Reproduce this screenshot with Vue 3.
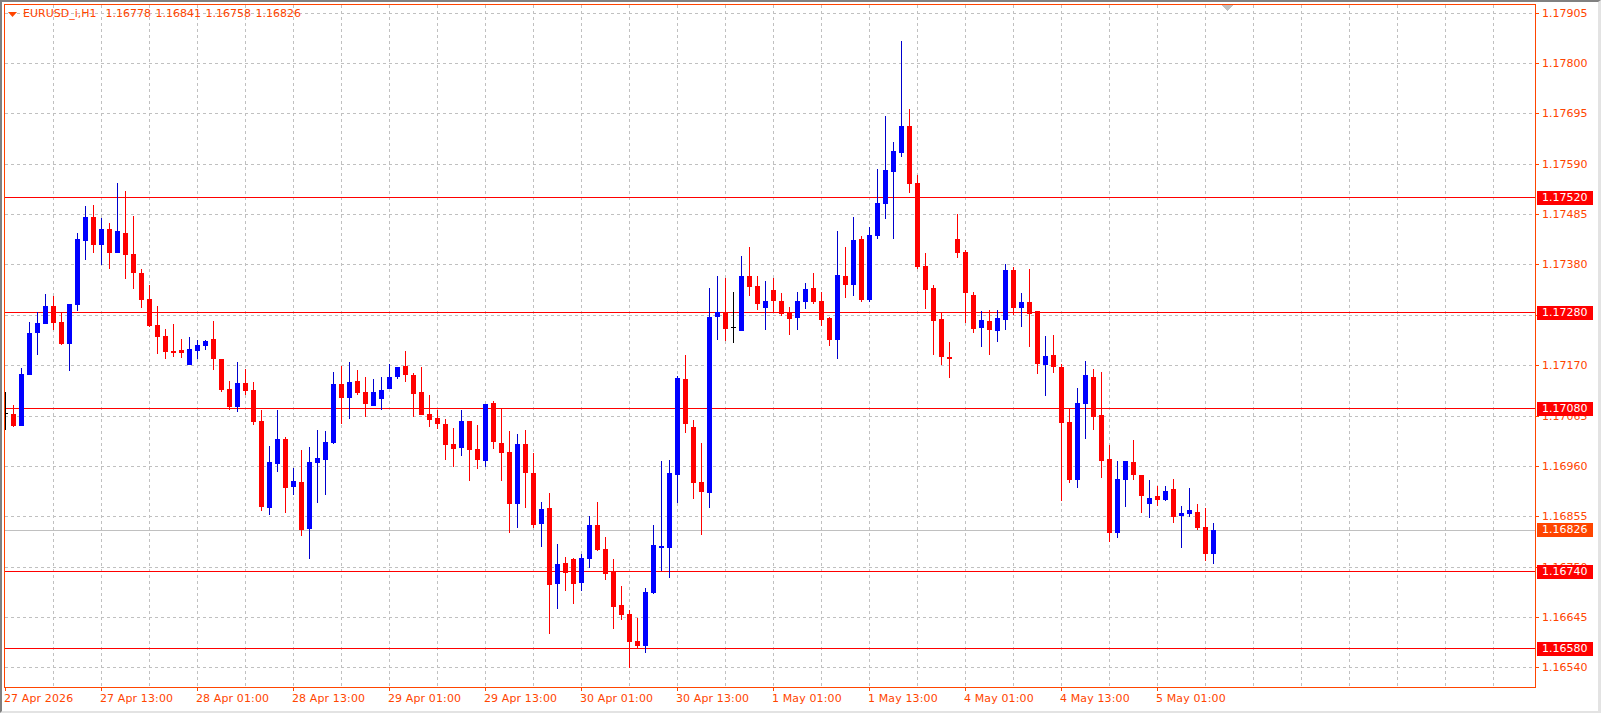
<script setup>
// each candle: colour, high, body top, body bottom, low
const raw = `k 392 413 414 430
r 405 414 426 427
b 368 374 426 426
b 322 333 375 375
b 312 323 333 355
b 294 306 324 324
r 296 306 323 330
r 313 322 344 345
b 304 304 344 371
b 233 239 305 311
b 206 217 241 260
r 205 217 245 253
b 218 229 245 265
r 223 229 253 269
b 183 231 253 253
r 191 233 255 279
r 216 254 273 289
r 269 273 300 308
r 285 299 326 327
r 306 325 337 354
r 329 336 352 359
r 324 351 353 357
r 339 350 353 358
b 337 349 365 365
b 340 345 351 359
b 340 341 346 350
r 321 339 359 370
r 359 359 390 392
r 381 389 407 410
b 362 383 407 412
r 369 383 391 395
r 382 390 422 425
r 410 421 507 511
b 446 462 508 515
b 410 439 464 472
r 437 439 488 513
b 468 481 487 495
r 450 482 530 536
b 447 462 529 559
b 430 458 463 503
b 431 442 460 495
b 372 384 443 444
r 366 384 398 424
b 362 382 398 419
r 370 381 393 395
r 377 392 404 417
b 379 392 406 406
b 377 390 399 410
b 364 377 389 389
b 367 367 377 379
r 351 366 375 382
r 373 375 394 417
r 367 392 415 415
r 395 414 420 427
r 410 418 424 429
r 419 424 445 460
r 428 444 449 467
b 410 421 448 456
r 421 421 450 481
r 425 449 460 469
b 404 404 461 467
r 401 403 442 449
r 409 443 453 481
r 431 452 504 533
b 434 444 504 528
r 430 444 473 508
r 453 473 525 528
b 502 509 524 547
r 493 508 585 634
b 544 564 584 609
r 557 563 573 591
r 558 559 584 604
b 554 558 583 591
b 516 525 559 568
r 502 525 550 551
r 537 549 574 580
r 559 572 607 629
r 586 605 615 620
r 610 614 642 668
r 618 641 646 648
b 588 592 646 653
b 525 545 593 594
b 461 546 548 571
b 460 473 548 578
b 376 378 475 503
r 355 379 424 433
r 420 427 483 499
r 443 482 492 535
b 288 317 493 508
b 276 312 317 340
r 278 312 329 341
k 292 327 328 343
b 256 276 331 331
r 247 276 287 296
r 276 286 304 310
b 281 301 308 330
r 278 290 301 312
r 293 301 314 316
r 307 312 319 335
b 292 301 318 330
b 283 289 302 309
r 273 288 302 304
r 292 301 320 326
r 317 318 340 346
b 231 275 340 359
r 247 276 285 298
b 217 240 285 296
r 236 239 300 302
b 227 235 300 302
b 169 203 236 239
b 116 170 204 219
b 142 151 172 239
b 41 126 153 157
r 109 126 184 193
r 175 183 267 269
r 253 266 290 309
r 285 288 321 355
r 312 319 357 365
r 342 357 359 378
r 214 239 253 258
r 250 252 293 323
r 292 295 329 333
b 311 320 328 347
r 310 321 330 355
b 310 318 331 342
b 264 270 320 330
r 267 270 308 315
b 293 302 308 327
r 269 302 314 347
r 311 311 364 374
b 336 356 365 396
r 335 355 367 373
r 364 367 423 501
r 409 422 480 483
b 388 403 480 488
b 361 375 404 439
r 369 377 417 430
r 372 415 461 478
r 445 459 533 542
b 461 479 533 538
b 461 461 480 507
r 440 462 475 480
r 475 475 496 513
b 480 498 504 518
r 486 496 500 506
b 486 491 500 501
r 479 489 517 523
b 506 513 516 548
b 488 510 514 517
r 504 512 528 530
r 508 527 554 561
b 523 530 554 564`

const fills = { r: '#ff0000', b: '#0000ff', k: '#000000' }
const wicks = { r: '#ff0000', b: '#0000cd', k: '#000000' }
const candles = raw.split('\n').map((row, i) => {
  const [c, high, top, bottom, low] = row.trim().split(' ')
  return { x: 5 + i * 8, fill: fills[c], wick: wicks[c], high: +high, top: +top, bottom: +bottom, low: +low }
})

const gridY = [13, 63, 113, 164, 214, 264, 315, 365, 416, 466, 516, 567, 617, 667]
const gridX = Array.from({ length: 31 }, (_, i) => 53 + i * 48)
const priceTicks = ['1.17905','1.17800','1.17695','1.17590','1.17485','1.17380','1.17275','1.17170','1.17065','1.16960','1.16855','1.16750','1.16645','1.16540']
  .map((p, i) => ({ p, y: gridY[i] }))
const levels = [
  { p: '1.17520', y: 197 },
  { p: '1.17280', y: 312 },
  { p: '1.17080', y: 408 },
  { p: '1.16740', y: 571 },
  { p: '1.16580', y: 648 },
]
const current = { p: '1.16826', y: 530 }
const times = ['27 Apr 2026','27 Apr 13:00','28 Apr 01:00','28 Apr 13:00','29 Apr 01:00','29 Apr 13:00','30 Apr 01:00','30 Apr 13:00','1 May 01:00','1 May 13:00','4 May 01:00','4 May 13:00','5 May 01:00']
  .map((t, i) => ({ t, x: 5 + i * 96 }))
</script>

<template>
  <div class="window">
    <div class="plot">
      <svg class="chart" width="1530" height="682" viewBox="5 5 1530 682">
        <line v-for="x in gridX" :key="'v' + x" class="grid" :x1="x + 0.5" :x2="x + 0.5" y1="5" y2="687" />
        <line v-for="y in gridY" :key="'h' + y" class="grid" x1="5" x2="1535" :y1="y + 0.5" :y2="y + 0.5" />
        <polygon points="1222,5 1233,5 1227.5,11" fill="#c0c0c0" />
        <rect x="5" :y="current.y" width="1530" height="1" fill="#c0c0c0" />
        <rect v-for="l in levels" :key="l.p" x="5" :y="l.y" width="1530" height="1" fill="#ff0000" />
        <g v-for="c in candles" :key="c.x">
          <rect :x="c.x" :y="c.high" width="1" :height="c.low - c.high" :fill="c.wick" />
          <rect :x="c.x - 2" :y="c.top" width="5" :height="Math.max(1, c.bottom - c.top)" :fill="c.fill" />
        </g>
      </svg>
      <div class="legend">
        <svg class="arrow" width="9" height="5" viewBox="0 0 9 5"><polygon points="0,0 9,0 4.5,5" fill="#ff4500" /></svg>
        <span class="symbol">EURUSD_i,H1</span>
        <span class="ohlc">1.16778</span>
        <span class="ohlc">1.16841</span>
        <span class="ohlc">1.16758</span>
        <span class="ohlc">1.16826</span>
      </div>
    </div>

    <div class="price-axis">
      <div v-for="t in priceTicks" :key="t.p" class="price" :style="{ top: t.y - 10 + 'px' }">
        <i class="price-tick"></i>{{ t.p }}
      </div>
      <div class="tag tag-current" :style="{ top: current.y - 11 + 'px' }">{{ current.p }}</div>
      <div v-for="l in levels" :key="l.p" class="tag tag-level" :style="{ top: l.y - 10 + 'px' }">{{ l.p }}</div>
    </div>

    <div class="time-axis">
      <div v-for="t in times" :key="t.t" class="time" :style="{ left: t.x - 5 + 'px' }">
        <i class="time-tick"></i>{{ t.t }}
      </div>
    </div>
  </div>
</template>

<style>
html, body { margin: 0; background: #fff; }
</style>

<style scoped>
.window {
  box-sizing: border-box;
  width: 1601px;
  height: 713px;
  display: grid;
  grid-template-columns: 1532px 1fr;
  grid-template-rows: 684px 1fr;
  padding: 2px 0 0 2px;
  border-top: 2px solid #808080;
  border-left: 2px solid #808080;
  border-right: 3px solid #e3e3e3;
  border-bottom: 2px solid #e3e3e3;
  background: #fff;
  font: 11px/14px "DejaVu Sans", sans-serif;
  color: #ff4500;
  overflow: hidden;
}
.plot {
  position: relative;
  box-sizing: border-box;
  border: 1px solid #ff4500;
}
.chart { display: block; shape-rendering: crispEdges; overflow: hidden; }
.grid { stroke: #c0c0c0; stroke-width: 1; stroke-dasharray: 3 3; }
.legend {
  position: absolute;
  left: 3px;
  top: 2px;
  display: flex;
  align-items: center;
  white-space: nowrap;
}
.arrow { margin-right: 6px; }
.symbol { margin-right: 9px; }
.ohlc { width: 50px; }
.price-axis, .time-axis { position: relative; }
.price, .tag { position: absolute; white-space: nowrap; }
.price { left: 6px; height: 14px; }
.price-tick {
  position: absolute;
  left: -6px;
  top: 6px;
  width: 3px;
  height: 1px;
  background: #ff4500;
}
.tag {
  left: 1px;
  width: 51px;
  height: 14px;
  padding-left: 5px;
  color: #fff;
}
.tag-level { background: #ff0000; }
.tag-current { background: #ff4500; }
.time-axis { grid-column: 1 / -1; }
.time { position: absolute; top: 4px; left: 0; white-space: nowrap; letter-spacing: 0.12px; }
.time-tick {
  position: absolute;
  left: 1px;
  top: -4px;
  width: 1px;
  height: 3px;
  background: #ff4500;
}
</style>
